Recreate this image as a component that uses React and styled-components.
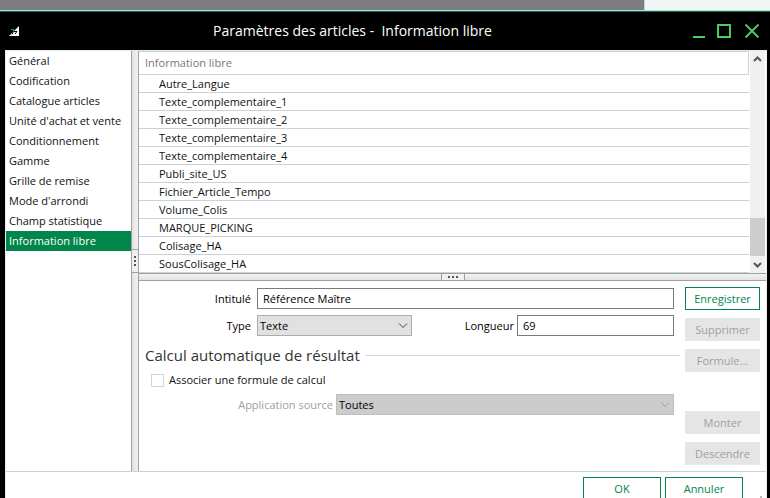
import React from "react";
import styled, { createGlobalStyle, css } from "styled-components";

const MENU = [
  "Général",
  "Codification",
  "Catalogue articles",
  "Unité d'achat et vente",
  "Conditionnement",
  "Gamme",
  "Grille de remise",
  "Mode d'arrondi",
  "Champ statistique",
  "Information libre",
];

const FIELDS = [
  "Autre_Langue",
  "Texte_complementaire_1",
  "Texte_complementaire_2",
  "Texte_complementaire_3",
  "Texte_complementaire_4",
  "Publi_site_US",
  "Fichier_Article_Tempo",
  "Volume_Colis",
  "MARQUE_PICKING",
  "Colisage_HA",
  "SousColisage_HA",
];

function Chevron({ up }) {
  return (
    <svg width="9" height="9" viewBox="0 0 9 9" aria-hidden="true">
      <path
        d={up ? "M1 6 L4.5 2.5 L8 6" : "M1 3 L4.5 6.5 L8 3"}
        fill="none"
        stroke="#555"
        strokeWidth="2"
      />
    </svg>
  );
}

function Select({ id, value, disabled }) {
  return (
    <SelectBox $disabled={disabled}>
      <select id={id} defaultValue={value} disabled={disabled}>
        <option>{value}</option>
      </select>
      <svg width="10" height="6" viewBox="0 0 10 6" aria-hidden="true">
        <path d="M1 0.5 L5 4.5 L9 0.5" fill="none" stroke="currentColor" />
      </svg>
    </SelectBox>
  );
}

function TitleBar() {
  return (
    <Header>
      <svg width="11" height="11" viewBox="0 0 11 11" aria-hidden="true">
        <path d="M10 0 V10 H0 Z" fill="#fff" />
        <path d="M2 3.5 H4.5 V5" fill="none" stroke="#0c4" />
        <path d="M3 8.5 L4.5 5.5 M5 5.5 H8 L6 8" fill="none" stroke="#000" />
      </svg>
      <h1>Paramètres des articles -&nbsp; Information libre</h1>
      <WindowButton aria-label="Réduire">
        <svg width="18" height="14" viewBox="0 0 18 14">
          <path d="M6 13 H18" />
        </svg>
      </WindowButton>
      <WindowButton aria-label="Agrandir">
        <svg width="18" height="14" viewBox="0 0 18 14">
          <path d="M3 1 H15 V13 H3 Z" />
        </svg>
      </WindowButton>
      <WindowButton aria-label="Fermer">
        <svg width="18" height="14" viewBox="0 0 18 14">
          <path d="M2.5 0.5 L15.5 13.5 M15.5 0.5 L2.5 13.5" />
        </svg>
      </WindowButton>
    </Header>
  );
}

function FieldList() {
  return (
    <ListPane>
      <Table>
        <thead>
          <tr>
            <th>Information libre</th>
          </tr>
        </thead>
        <tbody>
          {FIELDS.map((name) => (
            <tr key={name}>
              <td>{name}</td>
            </tr>
          ))}
        </tbody>
      </Table>
      <Scrollbar>
        <ScrollButton aria-label="Défiler vers le haut">
          <Chevron up />
        </ScrollButton>
        <Track />
        <Thumb />
        <ScrollButton aria-label="Défiler vers le bas">
          <Chevron />
        </ScrollButton>
      </Scrollbar>
    </ListPane>
  );
}

function Details() {
  return (
    <Form onSubmit={(e) => e.preventDefault()}>
      <Fields>
        <Row>
          <Label htmlFor="intitule">Intitulé</Label>
          <TextInput id="intitule" defaultValue="Référence Maître" />
        </Row>
        <TypeRow>
          <Label htmlFor="type">Type</Label>
          <Select id="type" value="Texte" />
          <LengthField>
            <Label htmlFor="longueur">Longueur</Label>
            <TextInput id="longueur" defaultValue="69" />
          </LengthField>
        </TypeRow>
        <SectionTitle>Calcul automatique de résultat</SectionTitle>
        <CheckRow>
          <input type="checkbox" />
          Associer une formule de calcul
        </CheckRow>
        <SourceRow>
          <Label htmlFor="source" $disabled>
            Application source
          </Label>
          <Select id="source" value="Toutes" disabled />
        </SourceRow>
      </Fields>
      <Actions>
        <Button>Enregistrer</Button>
        <Button disabled>Supprimer</Button>
        <Button disabled>Formule...</Button>
        <MoveGroup>
          <Button disabled>Monter</Button>
          <Button disabled>Descendre</Button>
        </MoveGroup>
      </Actions>
    </Form>
  );
}

export default function App() {
  return (
    <Screen>
      <GlobalStyle />
      <Backdrop />
      <Window>
        <TitleBar />
        <Content>
          <Body>
            <Sidebar>
              {MENU.map((item) => (
                <MenuItem
                  key={item}
                  href="#"
                  $active={item === "Information libre"}
                >
                  {item}
                </MenuItem>
              ))}
            </Sidebar>
            <VerticalSplitter>
              <Handle $vertical>
                <i />
                <i />
                <i />
              </Handle>
            </VerticalSplitter>
            <Main>
              <FieldList />
              <HorizontalSplitter>
                <Handle>
                  <i />
                  <i />
                  <i />
                </Handle>
              </HorizontalSplitter>
              <Details />
            </Main>
          </Body>
          <Footer>
            <Button>OK</Button>
            <Button>Annuler</Button>
            <Grip />
          </Footer>
        </Content>
      </Window>
    </Screen>
  );
}

const GlobalStyle = createGlobalStyle`
  * {
    box-sizing: border-box;
  }
  body {
    margin: 0;
  }
  body, button, input, select {
    font-family: "Open Sans", "Noto Sans", sans-serif;
    font-size: 11px;
    line-height: 16px;
    color: #000;
  }
`;

const Screen = styled.div`
  display: flex;
  flex-direction: column;
  height: 100vh;
  overflow: hidden;
`;

const Backdrop = styled.div`
  flex: none;
  display: flex;
  height: 11px;
  background: #7d7c80;
  border-bottom: 1px solid #c5d1d6;
  &::after {
    content: "";
    width: 125px;
    margin-left: auto;
    background: #f0f5f6;
    border-left: 1px solid #c5d1d6;
  }
`;

const Window = styled.div`
  flex: none;
  padding: 0 3px 0 5px;
  background: #000;
  border-top: 1px solid #007a4d;
`;

const Header = styled.header`
  display: flex;
  align-items: center;
  height: 38px;
  padding: 0 6px 0 4px;
  h1 {
    flex: 1;
    margin: 0;
    padding-left: 8px;
    font-weight: 400;
    font-size: 14px;
    line-height: 20px;
    text-align: center;
    color: #fff;
  }
`;

const WindowButton = styled.button`
  display: flex;
  width: 18px;
  height: 14px;
  padding: 0;
  margin-left: 10px;
  background: none;
  border: 0;
  svg {
    fill: none;
    stroke: #4bcc60;
    stroke-width: 2;
  }
`;

const Content = styled.div`
  background: #fff;
  border: 1px solid #e6ecee;
`;

const Body = styled.div`
  display: flex;
`;

const Sidebar = styled.nav`
  flex: none;
  width: 125px;
`;

const MenuItem = styled.a`
  display: block;
  padding-left: 3px;
  line-height: 20px;
  white-space: nowrap;
  text-decoration: none;
  color: ${(props) => (props.$active ? "#fff" : "#111")};
  background: ${(props) => (props.$active ? "#00854a" : "none")};
`;

const splitter = css`
  flex: none;
  display: flex;
  justify-content: center;
  border: solid #a0a0a0;
`;

const VerticalSplitter = styled.div`
  ${splitter}
  align-items: center;
  width: 8px;
  border-width: 0 1px;
  background: linear-gradient(to right, #e2e2e2, #f2f2f2);
`;

const HorizontalSplitter = styled.div`
  ${splitter}
  height: 8px;
  border-width: 1px 0;
  background: linear-gradient(#f2f2f2, #e2e2e2);
`;

const Handle = styled.div`
  display: flex;
  flex-direction: ${(props) => (props.$vertical ? "column" : "row")};
  align-items: center;
  justify-content: center;
  gap: 2px;
  width: ${(props) => (props.$vertical ? "6px" : "24px")};
  height: ${(props) => (props.$vertical ? "24px" : "6px")};
  border: solid #a0a0a0;
  border-width: ${(props) => (props.$vertical ? "1px 0" : "0 1px")};
  background: #f0f0f0;
  i {
    width: 2px;
    height: 2px;
    background: #555;
  }
`;

const Main = styled.main`
  flex: 1;
  min-width: 0;
`;

const ListPane = styled.section`
  display: flex;
  gap: 1px;
  padding-right: 1px;
`;

const Table = styled.table`
  flex: 1;
  border-collapse: separate;
  border-spacing: 0;
  th,
  td {
    padding: 0 6px;
    font-weight: 400;
    text-align: left;
    border-bottom: 1px solid #c8d3d8;
  }
  th {
    height: 24px;
    color: #777;
    border-top: 1px solid #c8d3d8;
    border-right: 1px solid #c8d3d8;
  }
  td {
    height: 18px;
    padding-left: 20px;
    color: #111;
  }
`;

const Scrollbar = styled.div`
  display: flex;
  flex-direction: column;
  width: 15px;
  background: #f0f0f0;
`;

const ScrollButton = styled.button`
  display: flex;
  align-items: center;
  justify-content: center;
  height: 17px;
  padding: 0;
  background: none;
  border: 0;
`;

const Track = styled.div`
  flex: 1;
`;

const Thumb = styled.div`
  height: 38px;
  background: #cdcdcd;
`;

const Form = styled.form`
  display: flex;
  gap: 5px;
  padding: 6px 6px 6px 0;
`;

const Fields = styled.div`
  flex: 1;
  padding-top: 1px;
`;

const Row = styled.div`
  display: grid;
  grid-template-columns: 112px 1fr;
  align-items: center;
  column-gap: 6px;
  margin: 0 6px 6px 0;
`;

const TypeRow = styled(Row)`
  grid-template-columns: 112px 155px 1fr;
`;

const LengthField = styled.div`
  display: grid;
  grid-template-columns: 1fr 157px;
  align-items: center;
  column-gap: 3px;
`;

const SourceRow = styled(Row)`
  grid-template-columns: 194px 1fr;
  column-gap: 3px;
`;

const Label = styled.label`
  text-align: right;
  color: ${(props) => (props.$disabled ? "#a0a0a0" : "#000")};
`;

const TextInput = styled.input`
  width: 100%;
  height: 21px;
  padding: 0 5px;
  background: #fff;
  border: 1px solid #7a7a7a;
`;

const SelectBox = styled.div`
  display: grid;
  align-items: center;
  color: ${(props) => (props.$disabled ? "#a0a0a0" : "#444")};
  select {
    grid-area: 1 / 1;
    width: 100%;
    height: 21px;
    padding: 0 20px 0 2px;
    appearance: none;
    opacity: 1;
    color: #000;
    background: ${(props) => (props.$disabled ? "#ccc" : "#e1e1e1")};
    border: 1px solid ${(props) => (props.$disabled ? "#bfbfbf" : "#adadad")};
    border-radius: 0;
  }
  svg {
    grid-area: 1 / 1;
    justify-self: end;
    margin-right: 4px;
    pointer-events: none;
  }
`;

const SectionTitle = styled.h2`
  display: flex;
  align-items: center;
  gap: 6px;
  margin: 8px 0 6px 6px;
  font-weight: 400;
  font-size: 15px;
  line-height: 22px;
  color: #333;
  &::after {
    content: "";
    flex: 1;
    height: 1px;
    background: #c8d8d8;
  }
`;

const CheckRow = styled.label`
  display: flex;
  align-items: center;
  gap: 5px;
  margin: 0 0 6px 12px;
  color: #111;
  input {
    width: 13px;
    height: 13px;
    margin: 0;
    appearance: none;
    background: #fff;
    border: 1px solid #c8d8dc;
  }
`;

const Actions = styled.div`
  display: flex;
  flex-direction: column;
  gap: 8px;
  width: 75px;
`;

const MoveGroup = styled(Actions)`
  padding-top: 31px;
`;

const Button = styled.button`
  height: 23px;
  padding: 0;
  color: #00854a;
  background: #fff;
  border: 1px solid #00854a;
  &:disabled {
    color: #a0a0a0;
    background: #e5e5e5;
    border-color: #e3e8ea;
  }
`;

const Footer = styled.footer`
  display: flex;
  justify-content: flex-end;
  gap: 4px;
  padding: 5px 4px 6px;
  border-top: 1px solid #c8d3d8;
  ${Button} {
    width: 78px;
  }
`;

const Grip = styled.span`
  align-self: flex-end;
  width: 2px;
  height: 2px;
  margin: 0 0 2px 13px;
  background: #bbb;
`;
